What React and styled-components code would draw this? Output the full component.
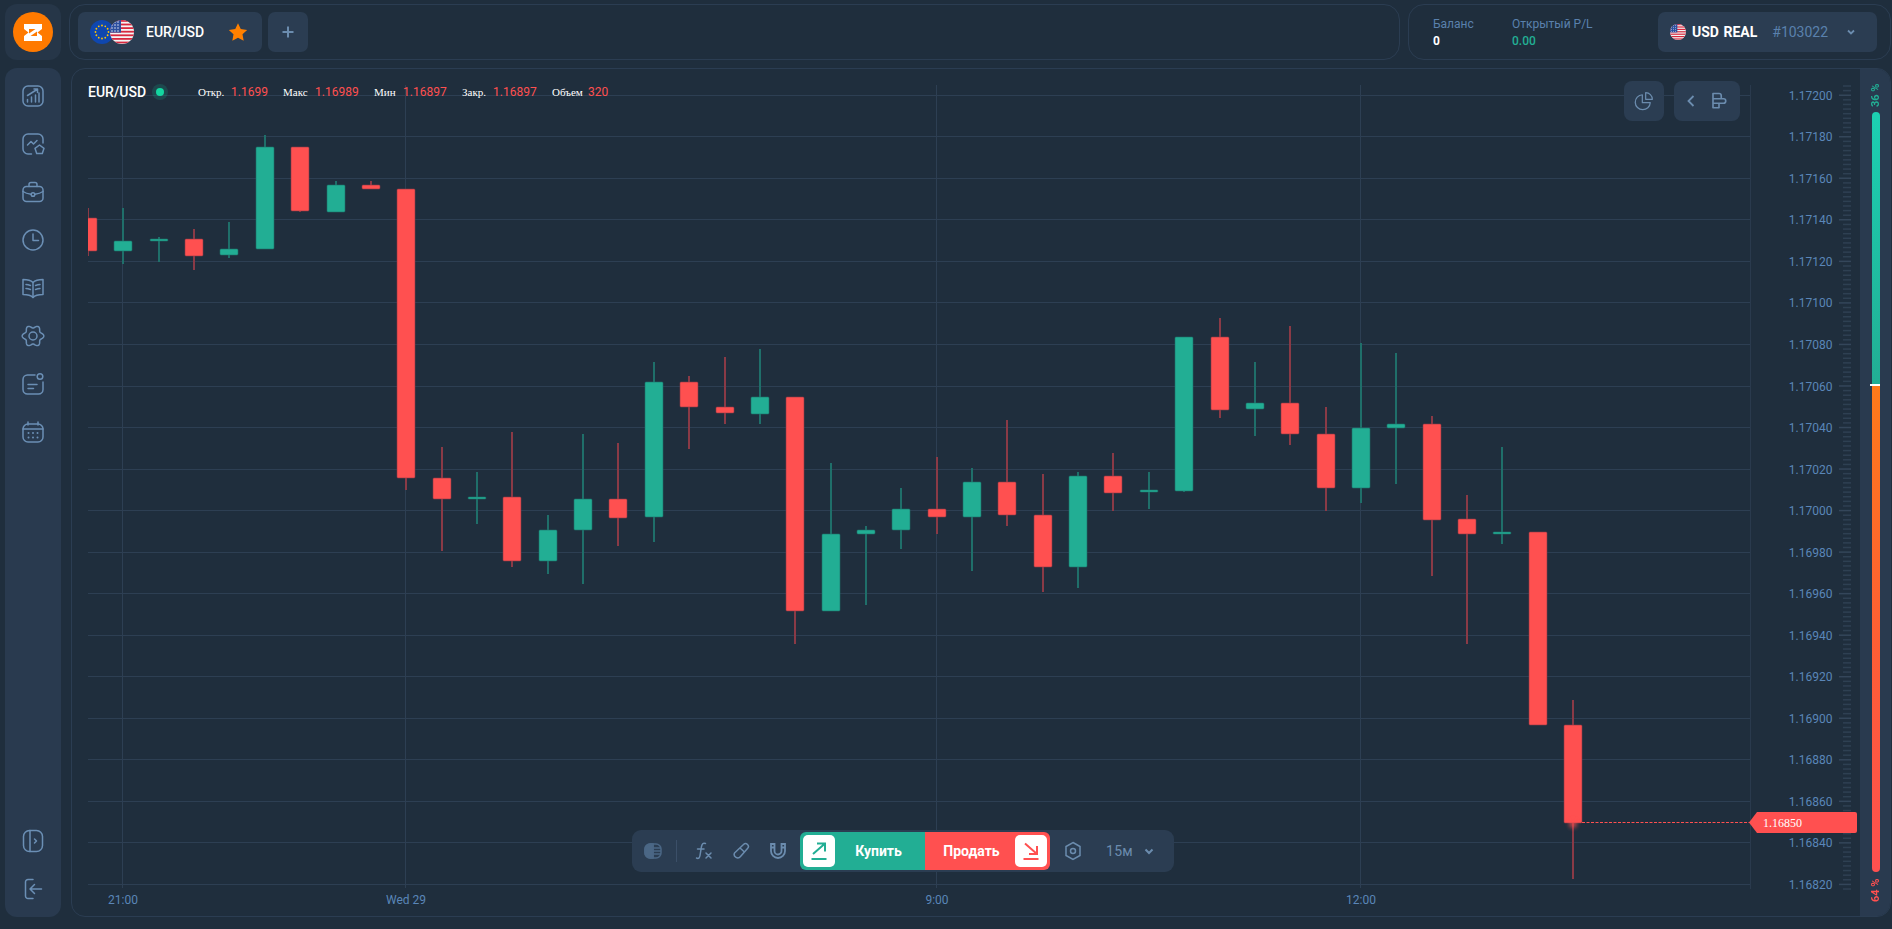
import styled, { createGlobalStyle } from "styled-components";

const GlobalStyle = createGlobalStyle`
  html, body {
    margin: 0;
    padding: 0;
    height: 100%;
    background: #1f2e3d;
    overflow: hidden;
  }
  * {
    box-sizing: border-box;
  }
`;

const Page = styled.div`
  width: 1892px;
  height: 929px;
  padding: 4px 1px 12px 5px;
  display: grid;
  grid-template-columns: 56px 1fr;
  grid-template-rows: 56px 1fr;
  gap: 8px;
  font-family: Roboto, "Noto Sans", sans-serif;
  color: #fff;
`;

const LogoTile = styled.div`
  background: #263648;
  border-radius: 12px;
  display: flex;
  align-items: center;
  justify-content: center;
`;

const TopBar = styled.div`
  display: flex;
  gap: 8px;
`;

const TopPanel = styled.div`
  border: 1px solid #2b3d52;
  border-radius: 16px;
  display: flex;
  align-items: center;
`;

const PairPanel = styled(TopPanel)`
  flex: 1;
  padding-left: 8px;
  gap: 6px;
`;

const AccountPanel = styled(TopPanel)`
  width: 483px;
  padding: 0 13px 0 24px;
`;

const PairTab = styled.div`
  width: 184px;
  height: 40px;
  background: #2b3d52;
  border-radius: 7px;
  display: flex;
  align-items: center;
  padding: 0 14px 0 12px;
  font-size: 14px;
  font-weight: 500;
`;

const PairName = styled.span`
  margin-left: 12px;
  flex: 1;
`;

const PlusButton = styled.div`
  width: 40px;
  height: 40px;
  background: #2b3d52;
  border-radius: 7px;
  color: #6b8cae;
  display: flex;
  align-items: center;
  justify-content: center;
`;

const Stat = styled.div`
  display: flex;
  flex-direction: column;
  gap: 3px;
  font-size: 12px;
  line-height: 14px;
  width: ${(p) => p.$width}px;
`;

const StatLabel = styled.span`
  color: #5a81ad;
`;

const StatValue = styled.span`
  color: ${(p) => p.$color};
  font-weight: ${(p) => p.$weight};
`;

const AccountButton = styled.div`
  margin-left: auto;
  width: 219px;
  height: 40px;
  background: #2b3d52;
  border-radius: 7px;
  display: flex;
  align-items: center;
  padding: 0 20px 0 12px;
`;

const AccountName = styled.span`
  font-size: 14px;
  font-weight: 700;
  margin-left: 6px;
  word-spacing: 1px;
`;

const AccountId = styled.span`
  font-size: 14px;
  color: #5a81ad;
  margin-left: 15px;
  flex: 1;
`;

const Sidebar = styled.nav`
  background: #293a4f;
  border-radius: 12px;
  padding: 4px 0;
  display: flex;
  flex-direction: column;
`;

const SideItem = styled.div`
  height: 48px;
  display: flex;
  align-items: center;
  justify-content: center;
  color: #6b8fb5;
`;

const SideSpacer = styled.div`
  flex: 1;
`;

const ChartPanel = styled.section`
  position: relative;
  margin-left: 2px;
  border: 1px solid #2b3d52;
  border-radius: 14px;
  overflow: hidden;
  display: flex;
`;

const ChartArea = styled.div`
  position: relative;
  flex: 1;
`;

const ChartSvg = styled.svg`
  display: block;
  font-family: Roboto, sans-serif;
`;

const Legend = styled.div`
  position: absolute;
  top: 16px;
  left: 16px;
  height: 14px;
  display: flex;
  align-items: center;
  font-size: 12px;
`;

const LegendName = styled.span`
  font-size: 14px;
  font-weight: 500;
  width: 58px;
`;

const LiveDot = styled.span`
  width: 8px;
  height: 8px;
  border-radius: 50%;
  background: #14d6a0;
  box-shadow: 0 0 0 4px rgba(20, 214, 160, 0.16);
  margin: 0 34px 0 10px;
`;

const LegendLabel = styled.span`
  font-family: "Liberation Serif", serif;
  font-size: 11px;
  width: ${(p) => p.$width}px;
`;

const LegendValue = styled.span`
  color: #ff5050;
  width: ${(p) => p.$width}px;
`;

const ChartTools = styled.div`
  position: absolute;
  top: 12px;
  right: 120px;
  display: flex;
  gap: 10px;
`;

const ChartTool = styled.div`
  width: ${(p) => p.$width}px;
  height: 40px;
  background: #2b3d52;
  border-radius: 8px;
  color: #6b8cae;
  display: flex;
  align-items: center;
  justify-content: center;
  gap: 14px;
`;

const Toolbar = styled.div`
  position: absolute;
  left: 560px;
  top: 761px;
  width: 542px;
  height: 42px;
  background: #2b3d52;
  border-radius: 9px;
  display: flex;
  align-items: center;
  padding-left: 12px;
  color: #6b8cae;
`;

const ToolIcon = styled.div`
  width: ${(p) => p.$width || 37}px;
  display: flex;
  justify-content: center;
`;

const Divider = styled.div`
  width: 1px;
  height: 22px;
  background: #3b4f68;
  margin: 0 8px 0 14px;
`;

const TradeButton = styled.div`
  width: 125px;
  height: 38px;
  margin-left: ${(p) => (p.$side === "buy" ? "4px" : "0")};
  background: ${(p) => p.$color};
  border-radius: ${(p) => (p.$side === "buy" ? "6px 0 0 6px" : "0 6px 6px 0")};
  display: flex;
  flex-direction: ${(p) => (p.$side === "buy" ? "row" : "row-reverse")};
  align-items: center;
  padding: 0 3px;
  font-size: 14px;
  font-weight: 700;
  color: #fff;
`;

const TradeIcon = styled.div`
  width: 32px;
  height: 32px;
  background: #fff;
  border-radius: 5px;
  display: flex;
  align-items: center;
  justify-content: center;
  color: ${(p) => p.$color};
`;

const TradeLabel = styled.span`
  flex: 1;
  text-align: center;
`;

const Timeframe = styled.span`
  font-size: 14px;
  width: 37px;
  margin-left: 10px;
  letter-spacing: 0.3px;
`;

const SentimentStrip = styled.aside`
  width: 30px;
  background: #293a4f;
  position: relative;
  display: flex;
  flex-direction: column;
  align-items: center;
  padding-top: 15px;
`;

const SentimentText = styled.span`
  writing-mode: vertical-rl;
  transform: rotate(180deg);
  white-space: nowrap;
  font-size: 11px;
  font-weight: 700;
  line-height: 10px;
  height: 23px;
  color: ${(p) => p.$color};
  margin-left: 2px;
`;

const SentimentBar = styled.div`
  width: 8px;
  height: 760px;
  margin: 5px 0 7px 2px;
  border-radius: 4px;
  position: relative;
  background: linear-gradient(
    #1cd0b2 0,
    #22ae94 36%,
    #ff7a1a 36%,
    #ff5e34 70%,
    #ff5050 100%
  );
`;

const SentimentMark = styled.div`
  position: absolute;
  left: -2px;
  right: 0;
  top: 272px;
  height: 2px;
  background: #fff;
`;

const Flags = styled.div`
  display: flex;
  width: 44px;
  & > svg + svg {
    margin-left: -4px;
  }
`;

const icon = {
  fill: "none",
  stroke: "currentColor",
  strokeWidth: 1.5,
  strokeLinecap: "round",
  strokeLinejoin: "round",
};

// six soft lobes, a bit wider than tall
const gearPath = () => {
  const pts = [];
  for (let i = 0; i < 120; i++) {
    const a = (i / 120) * Math.PI * 2;
    const r = 9.4 + 1.4 * Math.cos(6 * a);
    pts.push(`${(12 + r * Math.cos(a)).toFixed(2)} ${(12 + r * Math.sin(a)).toFixed(2)}`);
  }
  return `M${pts.join("L")}Z`;
};

const SideIcons = [
  <>
    <rect x="2" y="2" width="20" height="20" rx="5" />
    <path d="M6.5 18v-2.5M10.5 18v-5M14.5 18v-7M18 18V9M6.5 11.5 16 5.5M13 5h3.5v3.5" />
  </>,
  <>
    <path d="M10.5 22H7a5 5 0 0 1-5-5V7a5 5 0 0 1 5-5h10a5 5 0 0 1 5 5v4" />
    <path d="M6.5 13 10 9.500l2.500 2.500L16 8.500" />
    <path d="m18.500 13 4.500 3.300-1.700 5.200h-5.600L14 16.300z" />
  </>,
  <>
    <rect x="2" y="6.500" width="20" height="15" rx="3.500" />
    <path d="M8 6.500V4.500a2 2 0 0 1 2-2h4a2 2 0 0 1 2 2v2M2 11.500c3 2 6 2.500 8 2.800M22 11.500c-3 2-6 2.500-8 2.800" />
    <circle cx="12" cy="14.500" r="1.800" />
  </>,
  <>
    <circle cx="12" cy="12" r="10" />
    <path d="M12 6v6.500h5.500" />
  </>,
  <>
    <path d="M12 6.500C10 4.500 6 3.500 2 3.500v15c4 0 8 .8 10 3 2-2.200 6-3 10-3v-15c-4 0-8 1-10 3z" />
    <path d="M12 6.500v15M5 8.500c1.500 0 3 .4 4.500 1M5 12.500c1.500 0 3 .4 4.500 1M19 8.500c-1.500 0-3 .4-4.500 1M19 12.500c-1.500 0-3 .4-4.500 1" />
  </>,
  <>
    <path d={gearPath()} />
    <circle cx="12" cy="12" r="4" />
  </>,
  <>
    <path d="M14 3H6.500A4.500 4.500 0 0 0 2 7.500v10A4.500 4.500 0 0 0 6.500 22h11a4.500 4.500 0 0 0 4.500-4.500V10" />
    <circle cx="19" cy="4.500" r="2.800" />
    <path d="M7 12.500h9M7 16.500h5.500" />
  </>,
  <>
    <rect x="2" y="4" width="20" height="18" rx="5" />
    <path d="M7 2v3M17 2v3M2 9h20" />
    <path d="M7.500 13h.01M12 13h.01M16.500 13h.01M7.500 17.500h.01M12 17.500h.01M16.500 17.500h.01" strokeWidth="2" />
  </>,
];

const Glyph = ({ size = 24, children }) => (
  <svg width={size} height={size} viewBox="0 0 24 24" {...icon}>
    {children}
  </svg>
);

const Logo = () => (
  <svg width="40" height="40" viewBox="0 0 40 40">
    <circle cx="20" cy="20" r="20" fill="#ff7a00" />
    <g transform="translate(11 12)">
      <path d="M0 0H18V5L13.500 8.500 18 12V17H0V12L4.500 8.500 0 5Z" fill="#fff" />
      <path d="M5 5H11.500L5 9.500ZM13 12H6.500L13 7.500Z" fill="#ff7a00" />
    </g>
  </svg>
);

const UsFlag = ({ size }) => {
  const rows = [0, 1, 2, 3, 4, 5, 6];
  return (
    <svg width={size} height={size} viewBox="0 0 24 24">
      <clipPath id={`us${size}`}>
        <circle cx="12" cy="12" r="12" />
      </clipPath>
      <g clipPath={`url(#us${size})`}>
        <rect width="24" height="24" fill="#f4f4f4" />
        {rows.map((r) => (
          <rect key={r} y={r * 3.6} width="24" height="1.8" fill="#d8283f" />
        ))}
        <rect width="11" height="12.6" fill="#2c4f9e" />
        {[2, 5, 8].map((x) =>
          [2, 5, 8, 11].map((y) => (
            <circle key={`${x}-${y}`} cx={x} cy={y} r=".7" fill="#fff" />
          ))
        )}
      </g>
    </svg>
  );
};

const EuFlag = () => {
  const stars = Array.from({ length: 12 }, (_, i) => (i * Math.PI) / 6);
  return (
    <svg width="24" height="24" viewBox="0 0 24 24">
      <circle cx="12" cy="12" r="12" fill="#0f47af" />
      {stars.map((a) => (
        <circle
          key={a}
          cx={12 + 6.5 * Math.cos(a)}
          cy={12 + 6.5 * Math.sin(a)}
          r=".9"
          fill="#ffc400"
        />
      ))}
    </svg>
  );
};

const H_LINES = Array.from({ length: 20 }, (_, k) => 95.3 + k * 41.53);
const PRICES = Array.from({ length: 20 }, (_, k) => (1.172 - k * 0.0002).toFixed(5));
const TICKS = Array.from({ length: 175 }, (_, i) => 86 + i * 4.615);
const V_LINES = [122, 405, 936, 1360];
const TIME_LABELS = ["21:00", "Wed 29", "9:00", "12:00"];

const RED = "#ff5050";
const GREEN = "#22ae94";

// cx, wick top, wick bottom, body top, body bottom, side
const CANDLES = [
  [88, 208, 256, 218, 251, "r"],
  [123, 208, 264, 241, 251, "g"],
  [159, 237, 262, 239, 241, "g"],
  [194, 229, 270, 239, 256, "r"],
  [229, 222, 258, 249, 255, "g"],
  [265, 135, 249, 147, 249, "g"],
  [300, 147, 212, 147, 211, "r"],
  [336, 181, 212, 185, 212, "g"],
  [371, 181, 189, 185, 189, "r"],
  [406, 189, 490, 189, 478, "r"],
  [442, 447, 551, 478, 499, "r"],
  [477, 472, 524, 497, 499, "g"],
  [512, 432, 567, 497, 561, "r"],
  [548, 515, 574, 530, 561, "g"],
  [583, 434, 584, 499, 530, "g"],
  [618, 443, 546, 499, 518, "r"],
  [654, 362, 542, 382, 517, "g"],
  [689, 376, 449, 382, 407, "r"],
  [725, 357, 424, 407, 413, "r"],
  [760, 349, 424, 397, 414, "g"],
  [795, 397, 644, 397, 611, "r"],
  [831, 463, 611, 534, 611, "g"],
  [866, 526, 605, 530, 534, "g"],
  [901, 488, 549, 509, 530, "g"],
  [937, 457, 534, 509, 517, "r"],
  [972, 468, 571, 482, 517, "g"],
  [1007, 420, 526, 482, 515, "r"],
  [1043, 474, 592, 515, 567, "r"],
  [1078, 472, 588, 476, 567, "g"],
  [1113, 453, 511, 476, 493, "r"],
  [1149, 472, 509, 490, 492, "g"],
  [1184, 337, 492, 337, 491, "g"],
  [1220, 318, 418, 337, 410, "r"],
  [1255, 362, 436, 403, 409, "g"],
  [1290, 326, 445, 403, 434, "r"],
  [1326, 407, 511, 434, 488, "r"],
  [1361, 343, 503, 428, 488, "g"],
  [1396, 353, 484, 424, 428, "g"],
  [1432, 416, 576, 424, 520, "r"],
  [1467, 495, 644, 519, 534, "r"],
  [1502, 447, 544, 532, 534, "g"],
  [1538, 532, 725, 532, 725, "r"],
  [1573, 700, 879, 725, 823, "r"],
];

function Chart() {
  return (
    <ChartSvg width="1788" height="846" viewBox="72 69 1788 846">
      <defs>
        <clipPath id="plot">
          <rect x="88" y="69" width="1662" height="846" />
        </clipPath>
        <filter id="glow" x="-100%" y="-100%" width="300%" height="300%">
          <feGaussianBlur stdDeviation="2" />
        </filter>
      </defs>

      {H_LINES.map((y) => (
        <line
          key={y}
          x1="88"
          x2="1750"
          y1={Math.floor(y) + 0.5}
          y2={Math.floor(y) + 0.5}
          stroke="#2d3f53"
        />
      ))}
      {V_LINES.map((x) => (
        <line key={x} x1={x + 0.5} x2={x + 0.5} y1="85" y2="888" stroke="#2d3f53" />
      ))}
      <line x1="1750.5" x2="1750.5" y1="85" y2="889" stroke="#2a3a4d" />

      {TICKS.map((y, i) => (
        <line
          key={y}
          x1={i % 9 === 2 ? 1839 : 1843}
          x2="1851"
          y1={y}
          y2={y}
          stroke="#34465a"
          strokeWidth="1.5"
          opacity={i % 9 === 2 ? 1 : 0.75}
        />
      ))}

      {PRICES.map((price, i) => (
        <text
          key={price}
          x="1832.5"
          y={H_LINES[i] + 4.5}
          textAnchor="end"
          fontSize="12"
          fill="#5a86b8"
        >
          {price}
        </text>
      ))}

      {TIME_LABELS.map((label, i) => (
        <text
          key={label}
          x={V_LINES[i] + 1}
          y="904"
          textAnchor="middle"
          fontSize="12"
          fill="#5a86b8"
        >
          {label}
        </text>
      ))}

      <g clipPath="url(#plot)">
        {CANDLES.map(([cx, wt, wb, bt, bb, side]) => {
          const color = side === "g" ? GREEN : RED;
          const dim = side === "g" ? "#1f6f6a" : "#8a3a46";
          return (
            <g key={cx}>
              <rect x={cx - 1} y={wt} width="2" height={wb - wt} fill={dim} />
              <rect
                x={cx - 9}
                y={bt}
                width="18"
                height={bb - bt}
                rx="1"
                fill={color}
                stroke={dim}
                strokeWidth=".6"
              />
            </g>
          );
        })}
      </g>

      <circle cx="1573" cy="824" r="4" fill={RED} opacity=".7" filter="url(#glow)" />
      <line
        x1="1582"
        x2="1750"
        y1="822.5"
        y2="822.5"
        stroke={RED}
        strokeDasharray="3 1.5"
      />
      <path d="M1749 822.5l8-10.500h98a2 2 0 0 1 2 2v17a2 2 0 0 1-2 2h-98z" fill={RED} />
      <text
        x="1763"
        y="826.5"
        fontFamily="'Liberation Serif', serif"
        fontSize="12"
        fill="#fff"
      >
        1.16850
      </text>
    </ChartSvg>
  );
}

export default function App() {
  return (
    <>
      <GlobalStyle />
      <Page>
        <LogoTile>
          <Logo />
        </LogoTile>

        <TopBar>
          <PairPanel>
            <PairTab>
              <Flags>
                <EuFlag />
                <UsFlag size={24} />
              </Flags>
              <PairName>EUR/USD</PairName>
              <svg width="20" height="20" viewBox="0 0 24 24" fill="#ff8000">
                <path d="m12 1.500 3.300 7 7.700 1-5.600 5.300 1.400 7.700-6.800-3.700-6.800 3.700 1.400-7.700L1 9.500l7.700-1z" />
              </svg>
            </PairTab>
            <PlusButton>
              <svg width="14" height="14" viewBox="0 0 14 14" fill="none" stroke="currentColor" strokeWidth="2">
                <path d="M7 1.500v11M1.500 7h11" />
              </svg>
            </PlusButton>
          </PairPanel>

          <AccountPanel>
            <Stat $width={79}>
              <StatLabel>Баланс</StatLabel>
              <StatValue $color="#fff" $weight={700}>0</StatValue>
            </Stat>
            <Stat $width={100}>
              <StatLabel>Открытый P/L</StatLabel>
              <StatValue $color="#22ae94" $weight={500}>0.00</StatValue>
            </Stat>
            <AccountButton>
              <UsFlag size={16} />
              <AccountName>USD REAL</AccountName>
              <AccountId>#103022</AccountId>
              <svg width="12" height="12" viewBox="0 0 12 12" fill="none" stroke="#6b8cae" strokeWidth="1.8">
                <path d="m3 4.500 3 3 3-3" />
              </svg>
            </AccountButton>
          </AccountPanel>
        </TopBar>

        <Sidebar>
          {SideIcons.map((glyph, i) => (
            <SideItem key={i}>
              <Glyph>{glyph}</Glyph>
            </SideItem>
          ))}
          <SideSpacer />
          <SideItem>
            <Glyph>
              <rect x="2.500" y="1.500" width="19" height="21" rx="6" />
              <path d="M9 1.500v21M13.500 10l2 2-2 2" />
            </Glyph>
          </SideItem>
          <SideItem>
            <Glyph>
              <path d="M12 2.500H7a2.500 2.500 0 0 0-2.500 2.500v14A2.500 2.500 0 0 0 7 21.500h5M20.500 12H9.500M13.500 7.500 9 12l4.500 4.500" />
            </Glyph>
          </SideItem>
        </Sidebar>

        <ChartPanel>
          <ChartArea>
            <Chart />

            <Legend>
              <LegendName>EUR/USD</LegendName>
              <LiveDot />
              <LegendLabel $width={33}>Откр.</LegendLabel>
              <LegendValue $width={52}>1.1699</LegendValue>
              <LegendLabel $width={32}>Макс</LegendLabel>
              <LegendValue $width={59}>1.16989</LegendValue>
              <LegendLabel $width={29}>Мин</LegendLabel>
              <LegendValue $width={59}>1.16897</LegendValue>
              <LegendLabel $width={31}>Закр.</LegendLabel>
              <LegendValue $width={59}>1.16897</LegendValue>
              <LegendLabel $width={36}>Объем</LegendLabel>
              <LegendValue $width={30}>320</LegendValue>
            </Legend>

            <ChartTools>
              <ChartTool $width={40}>
                <Glyph size={20}>
                  <path d="M10 4.500a9 9 0 1 0 9.500 9.500H10z" />
                  <path d="M14 2a8 8 0 0 1 8 8h-8z" />
                </Glyph>
              </ChartTool>
              <ChartTool $width={66}>
                <svg width="10" height="14" viewBox="0 0 10 14" fill="none" stroke="currentColor" strokeWidth="1.8">
                  <path d="M7.500 2 2.500 7l5 5" />
                </svg>
                <Glyph size={18}>
                  <path d="M4 2h8a3 3 0 0 1 3 3v4H4zM4 9h14a3 3 0 0 1 3 3 3 3 0 0 1-3 3H4zM4 15h8v6H4z" strokeWidth="2.2" />
                </Glyph>
              </ChartTool>
            </ChartTools>

            <Toolbar>
              <ToolIcon $width={18}>
                <svg width="18" height="18" viewBox="0 0 18 18" fill="none" stroke="#4b6785" strokeWidth="1.5">
                  <rect x="1" y="2" width="16" height="14" rx="5" />
                  <path d="M9 2v14M9 6h8M9 9h8M9 12h8" />
                  <path d="M6 2a5 5 0 0 0-5 5v4a5 5 0 0 0 5 5h3V2z" fill="#4b6785" />
                </svg>
              </ToolIcon>
              <Divider />
              <ToolIcon>
                <svg width="20" height="20" viewBox="0 0 20 20" fill="none" stroke="currentColor" strokeWidth="1.5" strokeLinecap="round">
                  <path d="M11.500 2.500c-2.500-1-3.500.5-4 3l-1.500 9c-.4 2.500-1.500 3.500-3.500 2.500M3.500 8h6.500M12 12l5 5M17 12l-5 5" />
                </svg>
              </ToolIcon>
              <ToolIcon>
                <svg width="18" height="18" viewBox="0 0 18 18" fill="none" stroke="currentColor" strokeWidth="1.5" strokeLinejoin="round">
                  <path d="M11.500 2.500a2.800 2.800 0 0 1 4 4l-7 8a3.500 3.500 0 0 1-6-3.500z" />
                  <path d="m8 6 4.500 4" />
                </svg>
              </ToolIcon>
              <ToolIcon>
                <svg width="18" height="18" viewBox="0 0 18 18" fill="none" stroke="currentColor" strokeWidth="1.8">
                  <path d="M2 2v7a7 7 0 0 0 14 0V2h-3.500v7a3.500 3.500 0 0 1-7 0V2zM2 5.500h3.500M12.500 5.500H16" />
                </svg>
              </ToolIcon>
              <TradeButton $side="buy" $color="#22ae94">
                <TradeIcon $color="#22ae94">
                  <svg width="20" height="20" viewBox="0 0 20 20" fill="none" stroke="currentColor" strokeWidth="2">
                    <path d="M4 13 16 2.500M8 2.500h8v8M2.500 18h15" />
                  </svg>
                </TradeIcon>
                <TradeLabel>Купить</TradeLabel>
              </TradeButton>
              <TradeButton $side="sell" $color="#ff5050">
                <TradeIcon $color="#ff5050">
                  <svg width="20" height="20" viewBox="0 0 20 20" fill="none" stroke="currentColor" strokeWidth="2">
                    <path d="M4 2.500 16 13M16 5v8H8M2.500 18h15" />
                  </svg>
                </TradeIcon>
                <TradeLabel>Продать</TradeLabel>
              </TradeButton>
              <ToolIcon $width={46}>
                <svg width="18" height="20" viewBox="0 0 18 20" fill="none" stroke="currentColor" strokeWidth="1.5">
                  <path d="m9 1.500 7 4v9l-7 4-7-4v-9z" />
                  <circle cx="9" cy="10" r="2.500" />
                </svg>
              </ToolIcon>
              <Timeframe>15м</Timeframe>
              <svg width="12" height="12" viewBox="0 0 12 12" fill="none" stroke="currentColor" strokeWidth="2">
                <path d="m2.500 4.500 3.500 3.500 3.500-3.500" />
              </svg>
            </Toolbar>
          </ChartArea>

          <SentimentStrip>
            <SentimentText $color="#22ae94">36 %</SentimentText>
            <SentimentBar>
              <SentimentMark />
            </SentimentBar>
            <SentimentText $color="#ff5050">64 %</SentimentText>
          </SentimentStrip>
        </ChartPanel>
      </Page>
    </>
  );
}
